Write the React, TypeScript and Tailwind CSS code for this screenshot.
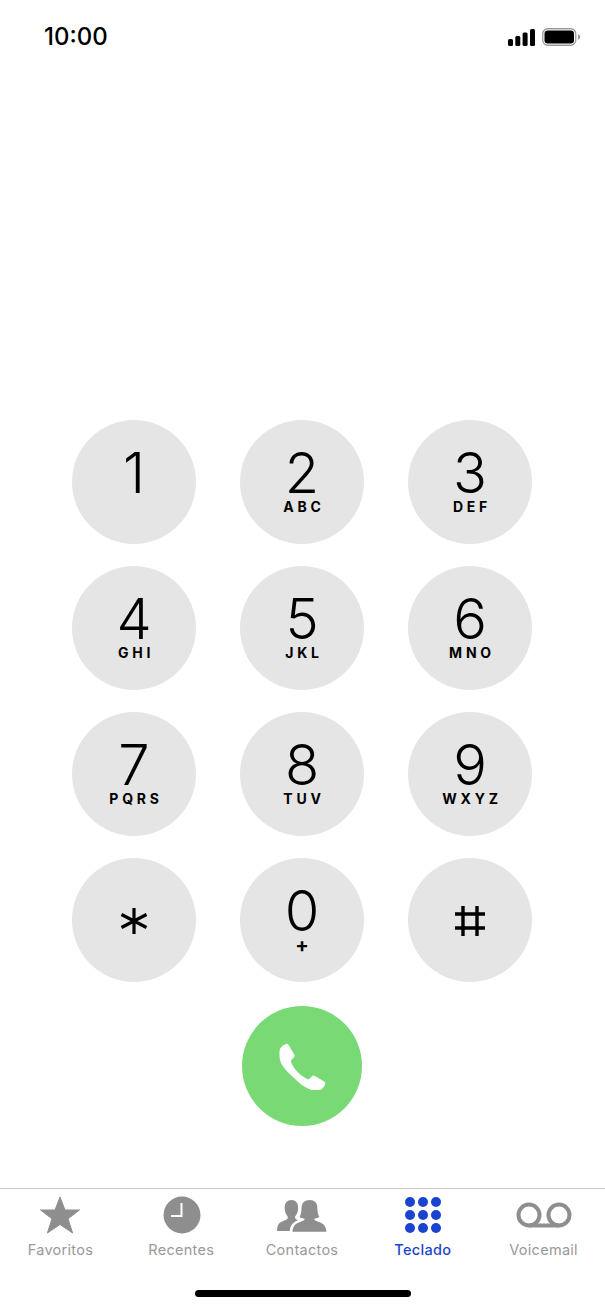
const keys = [
  { digit: "1", letters: "" },
  { digit: "2", letters: "ABC" },
  { digit: "3", letters: "DEF" },
  { digit: "4", letters: "GHI" },
  { digit: "5", letters: "JKL" },
  { digit: "6", letters: "MNO" },
  { digit: "7", letters: "PQRS" },
  { digit: "8", letters: "TUV" },
  { digit: "9", letters: "WXYZ" },
  { digit: "*", letters: "" },
  { digit: "0", letters: "+" },
  { digit: "#", letters: "" },
];

function StatusIcons() {
  return (
    <div className="flex items-center gap-[7px]">
      <svg width="27" height="18" viewBox="0 0 27 18" fill="#000">
        <rect x="0" y="11" width="5" height="7" rx="1.5" />
        <rect x="7.3" y="8" width="5" height="10" rx="1.5" />
        <rect x="14.600" y="4.500" width="5" height="13.500" rx="1.5" />
        <rect x="22" y="1" width="5" height="17" rx="1.5" />
      </svg>
      <svg width="39" height="18" viewBox="0 0 39 18">
        <rect x="0.75" y="0.75" width="33" height="16.500" rx="5" fill="none" stroke="#9a9a9a" strokeWidth="1.3" />
        <rect x="2.500" y="2.500" width="29.500" height="13" rx="3.200" fill="#000" />
        <path d="M36 6.300c1.400.4 2.200 1.500 2.200 2.700s-.8 2.300-2.200 2.700z" fill="#9a9a9a" />
      </svg>
    </div>
  );
}

function Key({ digit, letters }: { digit: string; letters: string }) {
  if (digit === "*") {
    return (
      <div className="w-[124px] h-[124px] rounded-full bg-[#e5e5e5] flex items-center justify-center pt-[2px]">
        <svg width="30" height="28" viewBox="0 0 30 28" stroke="#000" strokeWidth="3.200">
          <path d="M15 1v26M2.500 7.500l25 13M27.500 7.500l-25 13" />
        </svg>
      </div>
    );
  }
  if (digit === "#") {
    return (
      <div className="w-[124px] h-[124px] rounded-full bg-[#e5e5e5] flex items-center justify-center pt-[2px]">
        <svg width="32" height="32" viewBox="0 0 32 32" stroke="#000" strokeWidth="3.400">
          <path d="M9 1v30M23 1v30M1 9h30M1 23h30" />
        </svg>
      </div>
    );
  }
  return (
    <div className="w-[124px] h-[124px] rounded-full bg-[#e5e5e5] flex flex-col items-center pt-[28px]">
      <div className="h-[50px] text-[56px] leading-[50px] font-[360] text-black">{digit}</div>
      {letters === "+" ? (
        <div className="text-[20px] leading-[18px] font-bold text-black">+</div>
      ) : (
        <div className="pl-[4px] text-[14px] leading-[18px] font-bold tracking-[0.27em] text-black">{letters}</div>
      )}
    </div>
  );
}

function PhoneIcon() {
  return (
    <svg width="47" height="47" viewBox="0 0 42 42" fill="#fff">
      <path d="M1 5C2.500 2.800 4.500 1.200 6.500.8c.9-.2 1.600.2 2.100 1l5 8.500c.5.9.4 1.700-.2 2.400l-2.300 2.500c-.5.6-.6 1.200-.3 2 1.500 3.500 3.500 6.500 6 9s5.200 4.500 8.500 6c.7.3 1.300.2 1.900-.3l2.400-2.300c.7-.6 1.500-.7 2.400-.2l8.400 5c.9.500 1.200 1.300.9 2.200-.6 2-2.200 4-4.500 5.500-1.500 1-4 1-6.500.3-5.500-1.600-10.500-4.800-15-9.300S3.200 22.500 1.300 16.500C.3 13 0 8 1 5z" />
    </svg>
  );
}

function StarIcon() {
  return (
    <svg width="40" height="38" viewBox="0 0 40 38" fill="#8e8e8e">
      <path d="M20 1 25 14h14.500L28 22.800 32.600 37 20 28.500 7.400 37 12 22.800.5 14H15z" strokeLinejoin="round" stroke="#8e8e8e" strokeWidth="1" />
    </svg>
  );
}

function ClockIcon() {
  return (
    <svg className="ml-[2px]" width="38" height="38" viewBox="0 0 38 38">
      <circle cx="19" cy="19" r="18.500" fill="#8e8e8e" />
      <path d="M18.500 7v13H8" fill="none" stroke="#fff" strokeWidth="2" />
    </svg>
  );
}

function ContactsIcon() {
  return (
    <svg width="50" height="33" viewBox="0 2 52 34" fill="#8e8e8e">
      <path d="M15 3c4.500 0 7 3 7 8 0 3.500-1 6.500-2.800 8.600-.8 1-.6 2.600.8 3.300l1.800 1c-2.300 1-5 2.600-6.400 4.600-1.200 1.700-1.900 4-2.100 6.500H0c.2-4.500 1-7.300 3.400-8.800 2.500-1.500 5.600-2.300 7-3.300 1-.8 1.200-2 .4-3C9 17.700 8 14.500 8 11c0-5 2.500-8 7-8z" />
      <path d="M34 3c5 0 8 3 8 8.500 0 3.500.6 6.500 2 9-1.500 1-3.200 1.500-5 1.600v1.700c1.600 1.200 4.700 1.900 7.500 3.300 3 1.500 4.500 4.400 5 8.900H16c.4-4.500 2-7.400 5-8.900 2.800-1.400 5.900-2.100 7.500-3.300v-1.700c-1.800-.1-3.500-.6-5-1.600 1.400-2.500 2-5.500 2-9C25.500 6 29 3 34 3z" />
    </svg>
  );
}

function DotsIcon() {
  return (
    <svg width="36" height="36" viewBox="0 0 36 36" fill="#1a44d0">
      {[5, 18, 31].map((cy) =>
        [5, 18, 31].map((cx) => <circle key={`${cx}-${cy}`} cx={cx} cy={cy} r="5" />)
      )}
    </svg>
  );
}

function VoicemailIcon() {
  return (
    <svg width="56" height="28" viewBox="0 0 56 28" fill="none" stroke="#8e8e8e" strokeWidth="4">
      <circle cx="13" cy="14" r="10.500" />
      <circle cx="43" cy="14" r="10.500" />
      <path d="M13 24.500h30" />
    </svg>
  );
}

function Tab({ label, active, children }: { label: string; active?: boolean; children: React.ReactNode }) {
  return (
    <div className="w-[121px] flex flex-col items-center">
      <div className="h-[44px] flex items-center justify-center">{children}</div>
      <div className={`mt-[4px] text-[14.5px] leading-[18px] tracking-[0.02em] ${active ? "text-[#1a44d0] font-medium" : "text-[#999999]"}`}>{label}</div>
    </div>
  );
}

export default function App() {
  return (
    <div className="w-[605px] h-[1310px] bg-white flex flex-col font-['Inter',sans-serif] overflow-hidden">
      <div className="flex items-center justify-between pl-[44px] pr-[24px] pt-[23px] h-[50px]">
        <div className="text-[24px] leading-[27px] font-medium text-black">10:00</div>
        <StatusIcons />
      </div>

      <div className="mt-[370px] grid grid-cols-[124px_124px_124px] gap-x-[44px] gap-y-[22px] justify-center pr-[1px]">
        {keys.map((k) => (
          <Key key={k.digit} digit={k.digit} letters={k.letters} />
        ))}
      </div>

      <div className="mt-[24px] flex justify-center pr-[1px]">
        <div className="w-[120px] h-[120px] rounded-full bg-[#79d975] flex items-center justify-center">
          <PhoneIcon />
        </div>
      </div>

      <div className="mt-[62px] border-t border-[#c8c8c8] pt-[4px] flex justify-center pr-[1px]">
        <Tab label="Favoritos"><StarIcon /></Tab>
        <Tab label="Recentes"><ClockIcon /></Tab>
        <Tab label="Contactos"><ContactsIcon /></Tab>
        <Tab label="Teclado" active><DotsIcon /></Tab>
        <Tab label="Voicemail"><VoicemailIcon /></Tab>
      </div>

      <div className="mt-[31px] flex justify-center">
        <div className="w-[216px] h-[7px] rounded-full bg-black" />
      </div>
    </div>
  );
}
